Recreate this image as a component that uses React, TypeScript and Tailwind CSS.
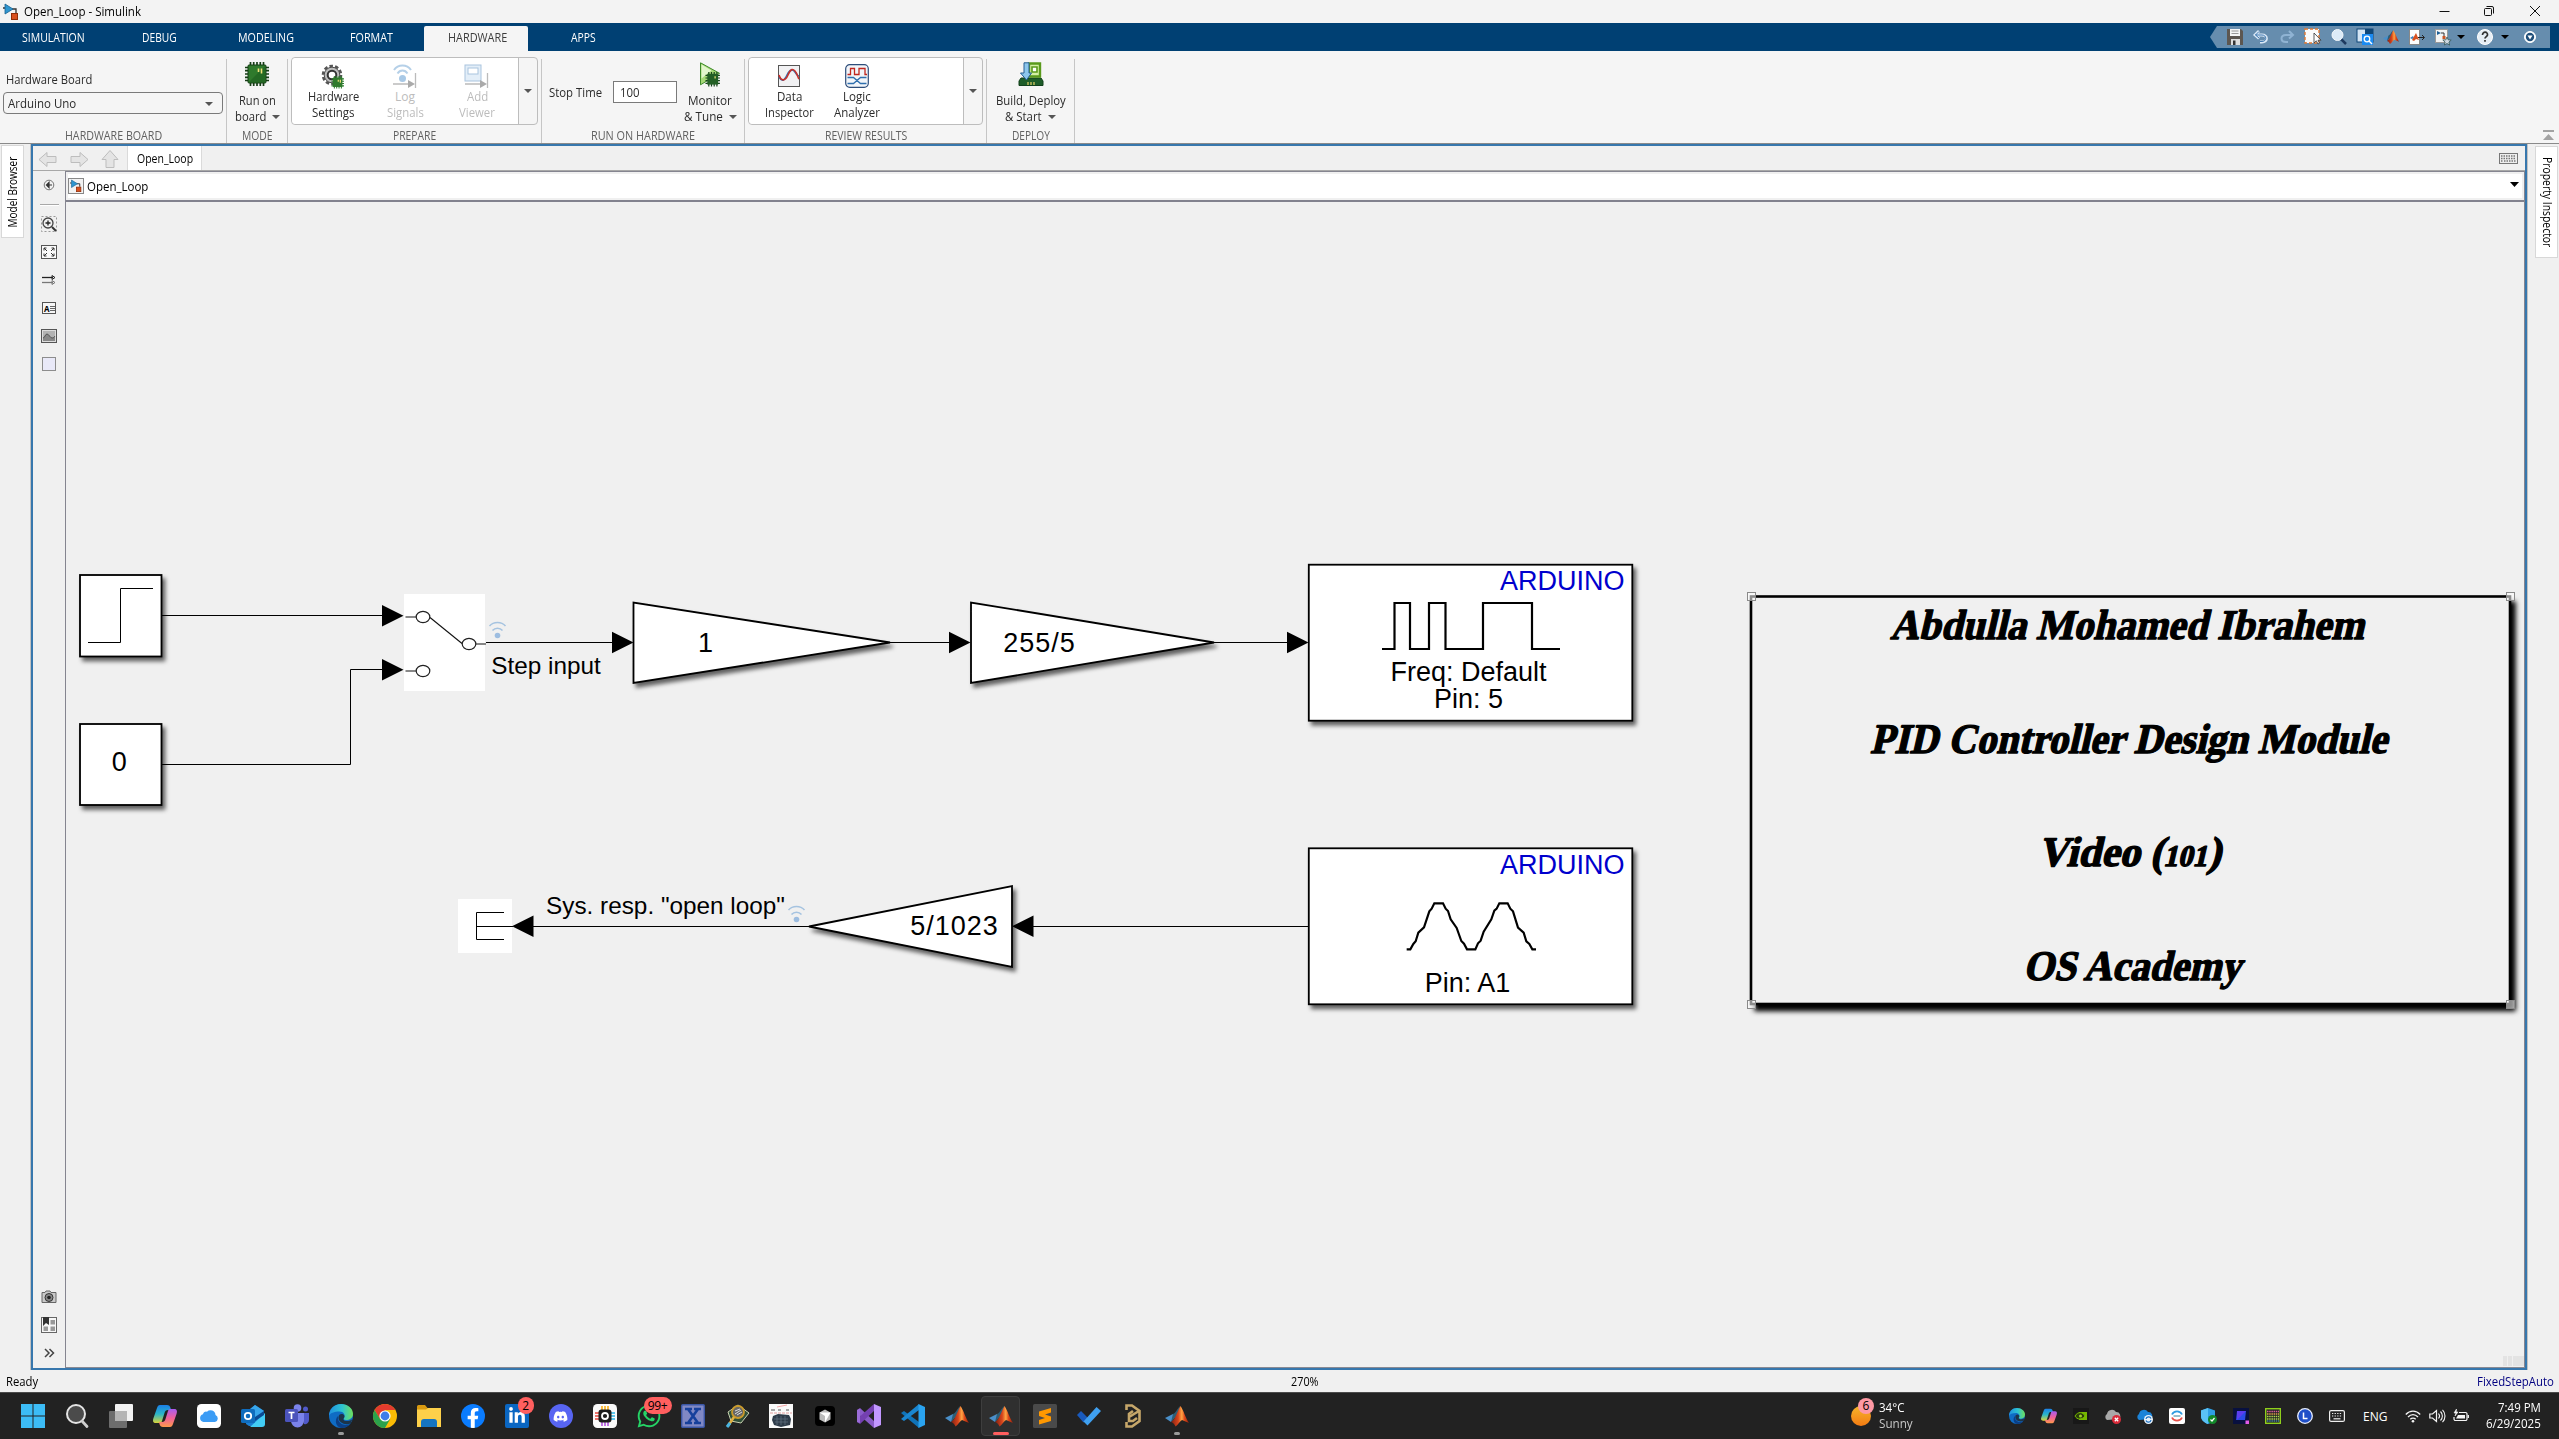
import { useLayoutEffect, useRef, useState } from "react";
import type { ReactNode } from "react";
import { FaDiscord, FaFacebookF, FaLinkedinIn, FaWhatsapp } from "react-icons/fa";

/* Text condensed or widened to a fixed advance width. */
function Fit({ w, children, className = "" }: { w: number; children: ReactNode; className?: string }) {
  const ref = useRef<HTMLSpanElement>(null);
  const [scale, setScale] = useState(1);
  useLayoutEffect(() => {
    const natural = ref.current?.offsetWidth ?0 + ref.current.offsetWidth : 0;
    if (natural) setScale(w / natural);
  }, [w]);
  return (
    <span className={`block shrink-0 whitespace-nowrap ${className}`} style={{ width: w }}>
      <span ref={ref} className="inline-block origin-left" style={{ transform: `scaleX(${scale})` }}>
        {children}
      </span>
    </span>
  );
}

function Ic({ s = 16, vb = 16, children, className = "" }: { s?: number; vb?: number; children: ReactNode; className?: string }) {
  return (
    <svg width={s} height={s} viewBox={`0 0 ${vb} ${vb}`} fill="none" className={`shrink-0 overflow-visible ${className}`}>
      {children}
    </svg>
  );
}

function Caret({ className = "text-[#555]" }: { className?: string }) {
  return (
    <svg width="8" height="4" viewBox="0 0 8 4" className={`shrink-0 ${className}`}>
      <path d="M0 0h8L4 4z" fill="currentColor" />
    </svg>
  );
}

/* ---------- icons ---------- */

const Matlab = ({ s = 24 }: { s?: number }) => (
  <Ic s={s} vb={24}>
    <defs>
      <linearGradient id="mlo" x1="0" x2="1">
        <stop offset="0" stopColor="#7a1f12" />
        <stop offset=".4" stopColor="#d8441c" />
        <stop offset=".6" stopColor="#ffa544" />
        <stop offset=".75" stopColor="#dd4a1a" />
        <stop offset="1" stopColor="#8f1c0c" />
      </linearGradient>
    </defs>
    <path d="M0 14l8-4 3 2-5 6z" fill="#4a8fc9" />
    <path d="M8 10c3-1 4-5 7-8l-2 8-7 8z" fill="#2c5d74" />
    <path d="M6 18c4-2 6-10 9.500-16 3 4 5 12 8.500 17l-7-3c-2 1-4 5-6.500 6.500-1-2-2-4-4.500-4.500z" fill="url(#mlo)" />
  </Ic>
);

const ModelIcon = () => (
  <Ic>
    <path d="M0 4h2M9 5h4v4" stroke="#333" strokeWidth="1.300" />
    <path d="M2 0l8 5-8 5z" fill="#2f96d0" stroke="#16618f" strokeWidth=".8" />
    <rect x="8.500" y="9.500" width="6" height="6" fill="#d9501e" stroke="#8f2c08" />
  </Ic>
);

const Chip = ({ s = 24 }: { s?: number }) => (
  <Ic s={s} vb={24}>
    <path d="M5.500 0v24M8.700 0v24M12 0v24M15.300 0v24M18.500 0v24M0 5.500h24M0 8.700h24M0 12h24M0 15.300h24M0 18.500h24" stroke="#173d17" strokeWidth="1.700" />
    <rect x="3" y="3" width="18" height="18" rx="1" fill="#2f7a2c" stroke="#123f12" />
    <path d="M4 20L20 4v16z" fill="#1e5e20" opacity=".6" />
    <path d="M13.500 6.500v3.500M16.500 6.500v5" stroke="#f3e27a" strokeWidth="1.600" />
  </Ic>
);

const HwSettings = () => (
  <Ic s={24} vb={24}>
    <circle cx="11" cy="11" r="9" stroke="#555" strokeWidth="2.600" strokeDasharray="3.500 2.155" />
    <circle cx="11" cy="11" r="7.800" fill="#bdbdbd" stroke="#4d4d4d" />
    <circle cx="11" cy="11" r="4.300" fill="#fff" stroke="#333" strokeWidth="2" />
    <g transform="translate(10.500 12) scale(.52)">
      <path d="M5.500 0v24M10 0v24M14.500 0v24M19 0v24M0 5.500h24M0 10h24M0 14.500h24M0 19h24" stroke="#2c7d2c" strokeWidth="2" />
      <rect x="3" y="3" width="18" height="18" fill="#2f7a2c" />
      <path d="M13 7v4M17 7v6" stroke="#f3e27a" strokeWidth="2.200" />
    </g>
  </Ic>
);

const LogSignals = () => (
  <Ic s={24} vb={24}>
    <path d="M1 6c4-6 13-6 17 0M4.500 9.500c2.500-4 7.500-4 10 0" stroke="#b5d0e8" strokeWidth="2" />
    <circle cx="9.500" cy="14.500" r="3.500" fill="#a9c9e6" />
    <path d="M0 20h17M22.500 9v15" stroke="#bbb" strokeWidth="1.300" />
    <path d="M15 16l7 4-7 4z" fill="#aaa" />
  </Ic>
);

const AddViewer = () => (
  <Ic s={24} vb={24}>
    <rect x="0" y="1" width="16" height="16" fill="#e3eef8" stroke="#a9c4de" />
    <rect x="3" y="4" width="10" height="6" fill="#fff" stroke="#a9c4de" />
    <path d="M0 20h17M22.500 9v15" stroke="#bbb" strokeWidth="1.300" />
    <path d="M15 16l7 4-7 4z" fill="#aaa" />
  </Ic>
);

const MonitorTune = () => (
  <Ic s={24} vb={24}>
    <path d="M2.500.8l19 10.500-19 11.500z" fill="#a6d977" stroke="#3e8a2a" />
    <path d="M3.500 2.500l10 6-10 8z" fill="#e2f5cc" />
    <g transform="translate(7.500 10) scale(.6)">
      <path d="M5.500 0v24M10 0v24M14.500 0v24M19 0v24M0 5.500h24M0 10h24M0 14.500h24M0 19h24" stroke="#16401a" strokeWidth="2" />
      <rect x="3" y="3" width="18" height="18" fill="#235f25" />
      <path d="M16 7v4" stroke="#f3e27a" strokeWidth="2" />
    </g>
  </Ic>
);

const DataInspector = () => (
  <Ic s={22} vb={22}>
    <rect x=".5" y=".5" width="21" height="21" fill="#f1f1f3" stroke="#555" />
    <path d="M1 12c3 5 5 4 8-2s6-6 8-3 3 4 4 4" stroke="#2f6fae" strokeWidth="1.600" />
    <path d="M1 10c2 6 6 7 9 0s5-6 7-4 3 7 4 8" stroke="#c8302c" strokeWidth="1.600" />
  </Ic>
);

const LogicAnalyzer = () => (
  <Ic s={24} vb={24}>
    <rect x=".7" y=".7" width="22.600" height="22.600" rx="4" fill="#f2f5f9" stroke="#2d4d7a" strokeWidth="1.200" />
    <path d="M2.500 10.500h3v-6h4v6h4.500v-6h6v6h2" stroke="#c0271f" strokeWidth="1.300" />
    <path d="M2.500 13.500h6l7 6h6M2.500 19.500h6l7-6h6" stroke="#2f6fae" strokeWidth="1.300" />
  </Ic>
);

const BuildDeploy = () => (
  <Ic s={24} vb={24}>
    <path d="M2 16l-2 3v4.500h24V19l-2-3z" fill="#1d5c28" stroke="#12401b" />
    <path d="M9 20v3M12 20v3M15 20v3" stroke="#e4cf66" strokeWidth="1.200" />
    <path d="M10 1.500h11v13H10z" stroke="#5a9a1c" strokeWidth="2.400" fill="#d4efa4" />
    <path d="M13 5h5v5h-5z" fill="#fff" stroke="#5a9a1c" strokeWidth="1.600" />
    <path d="M5 .8h5V11h2.500L7.500 18 1.500 11H5z" fill="#8cc6ec" stroke="#265e93" />
  </Ic>
);

/* ---------- ribbon ---------- */

function Section({ label, lw, width, children }: { label: string; lw: number; width: string; children: ReactNode }) {
  return (
    <div className={`flex h-full shrink-0 ${width}`}>
      <div className="flex min-w-0 flex-1 flex-col">
        <div className="h-[77px]">{children}</div>
        <div className="flex h-[15px] justify-center text-[#616161]">
          <Fit w={lw}>{label}</Fit>
        </div>
      </div>
      <div className="mt-2 w-px bg-[#c6c6c6]" />
    </div>
  );
}

function ToolButton({ icon, a, aw, b, bw, caret, dim, width, gap = "gap-px" }: {
  icon: ReactNode; a: string; aw: number; b: string; bw: number; caret?: boolean; dim?: boolean; width: string; gap?: string;
}) {
  return (
    <div className={`flex flex-col items-center ${width} ${gap} ${dim ? "text-[#bcbcbc]" : "text-[#2b2b2b]"}`}>
      <div className="flex h-6 items-center">{icon}</div>
      <div className="flex flex-col items-center">
        <Fit w={aw}>{a}</Fit>
        <div className="flex items-center gap-1.5">
          <Fit w={bw}>{b}</Fit>
          {caret && <Caret />}
        </div>
      </div>
    </div>
  );
}

function Gallery({ width, pad, children }: { width: string; pad: string; children: ReactNode }) {
  return (
    <div className={`mt-1.5 ml-[3px] flex h-[68px] rounded border border-[#bdbdbd] bg-[#f5f5f5] ${width}`}>
      <div className={`flex flex-1 rounded-l bg-white pt-1.5 ${pad}`}>{children}</div>
      <div className="flex w-[19px] items-center justify-center border-l border-[#bdbdbd]">
        <Caret />
      </div>
    </div>
  );
}

const TABS = [
  { t: "SIMULATION", w: 63 },
  { t: "DEBUG", w: 35 },
  { t: "MODELING", w: 56 },
  { t: "FORMAT", w: 43 },
  { t: "HARDWARE", w: 59 },
  { t: "APPS", w: 25 },
];

function TitleBar() {
  return (
    <div className="flex h-[23px] items-center bg-[#f3f3f3] pl-[3px]">
      <ModelIcon />
      <Fit w={117} className="ml-[5px] leading-[22px] text-black">Open_Loop - Simulink</Fit>
      <div className="mr-[19px] ml-auto flex items-center gap-[35px] text-black">
        <Ic s={10} vb={10}><path d="M-.5 4.500h10" stroke="#111" /></Ic>
        <Ic s={10} vb={10} className="-ml-px">
          <rect x=".5" y="1.500" width="7" height="7" rx="1" stroke="#111" />
          <path d="M2.500 -.5H8A1.500 1.500 0 0 1 9.500 1v5.500" stroke="#111" />
        </Ic>
        <Ic s={10} vb={10} className="ml-px"><path d="M0-1l10 10M10-1L0 9" stroke="#111" /></Ic>
      </div>
    </div>
  );
}

function QuickAccess() {
  return (
    <div className="mt-[3px] mr-[9px] ml-auto flex h-[22px] items-center">
      <svg width="7" height="22" viewBox="0 0 7 22" className="shrink-0"><path d="M7 0v22L0 11z" fill="#668dae" /></svg>
      <div className="flex h-full w-[333px] items-center bg-[#668dae] pl-2.5">
        <div className="flex items-center gap-[10px]">
          <Ic>
            <path d="M0 0h14l2 2v14H0z" fill="#5c5650" />
            <path d="M3 0h10v7H3z" fill="#f4f4f4" /><path d="M4.500 2h7M4.500 4.500h7" stroke="#999" />
            <path d="M4 10h9v6H4z" fill="#ddd" /><path d="M6 11.500h2.500V16H6z" fill="#333" />
          </Ic>
          <Ic>
            <path d="M6 2L2 6l4 3.500M2 6h7c6 0 6 7 0 7H7" stroke="#dbe9f7" strokeWidth="2.800" />
            <path d="M6 2.500L2.500 6 6 9M2.500 6H9c5 0 5 6.500 0 6.500H7" stroke="#2e6ca8" strokeWidth=".9" />
          </Ic>
          <Ic><path d="M10 2l4 4-4 3.500M14 6H7c-6 0-6 7 0 7h2" stroke="#8fb3d3" strokeWidth="2" /></Ic>
          <Ic>
            <rect x="0" y="0" width="14" height="14" fill="#fbfbfb" stroke="#e07a35" strokeWidth="1.400" strokeDasharray="3 2" />
            <path d="M9 4v10l2.300-2.200L13 15l1.500-.8-1.500-3h3z" fill="#fff" stroke="#333" strokeWidth=".8" />
          </Ic>
          <Ic>
            <path d="M10 10l5 5" stroke="#1e3a5f" strokeWidth="2.500" />
            <circle cx="6.500" cy="6" r="5.500" fill="#dcebf7" stroke="#f4f8fb" />
          </Ic>
          <Ic>
            <rect x="0" y="0" width="16" height="13" fill="#d6e6f4" stroke="#0f4778" /><path d="M8 0h8v6H8z" fill="#0f4778" />
            <rect x="5" y="5" width="11" height="11" fill="#1b8bf2" /><circle cx="10" cy="10" r="2.800" stroke="#fff" strokeWidth="1.300" /><path d="M12 12l3 3" stroke="#fff" strokeWidth="1.400" />
          </Ic>
          <Matlab s={16} />
          <Ic>
            <rect x=".5" y=".5" width="10" height="15" fill="#fdfdfd" stroke="#888" />
            <path d="M1 9l3-2 1 2-2 1z" fill="#3b80bd" /><path d="M3 11l4-7 3 7-3-1-2 2z" fill="#d8501e" /><path d="M9 8.500h6M13 6l2.500 2.500L13 11" stroke="#222" />
          </Ic>
          <Ic>
            <rect x=".5" y=".5" width="12" height="13" fill="#f4f4f4" stroke="#999" />
            <path d="M2 2l4 2-4 2z" fill="#1d5f96" /><path d="M6 4h3v4" stroke="#333" /><rect x="7.500" y="7" width="3" height="3" fill="#c52" />
            <path d="M12 8l1.200 2.800 3 .3-2.300 2 .7 3-2.600-1.600L9.400 16l.7-3-2.300-2 3-.2z" fill="#cfd9e2" stroke="#355" strokeWidth=".8" />
          </Ic>
        </div>
        <Caret className="ml-[6px] text-black" />
        <Ic className="ml-3">
          <circle cx="8" cy="8" r="7.500" fill="#e6eef5" stroke="#fff" />
          <path d="M5.500 6c0-4 5.500-3.500 5 0-.3 1.600-2.500 1.700-2.500 3.500M8 11v1.800" stroke="#333" strokeWidth="1.700" />
        </Ic>
        <Caret className="ml-2 text-black" />
        <Ic s={12} vb={12} className="ml-[15px]">
          <circle cx="6" cy="6" r="5.500" fill="#fff" stroke="#fff" /><circle cx="6" cy="6" r="4.200" fill="#1f4e79" /><path d="M3.500 4.500h5L6 8.500z" fill="#fff" />
        </Ic>
      </div>
    </div>
  );
}

function Ribbon() {
  return (
    <>
      <div className="flex h-7 bg-[#004073]">
        {TABS.map((t) => {
          const active = t.t === "HARDWARE";
          return (
            <div key={t.t} className="h-full w-[106px] shrink-0 pt-[3px]">
              <div className={`flex h-[25px] w-[104px] justify-center rounded-t-[2px] pl-[3px] leading-6 ${active ? "bg-[#f5f5f5] text-[#3c3c3c]" : "text-white"}`}>
                <Fit w={t.w}>{t.t}</Fit>
              </div>
            </div>
          );
        })}
        <QuickAccess />
      </div>
      <div className="flex h-[93px] border-b border-[#8a8a8a] bg-[#f5f5f5] leading-4">
        <Section label="HARDWARE BOARD" lw={97} width="w-[227px]">
          <div className="pt-[21px] pl-[3px] text-[#2b2b2b]">
            <Fit w={86} className="ml-[3px]">Hardware Board</Fit>
            <div className="mt-1 flex h-[22px] w-[220px] items-center justify-between rounded border border-[#7a7a7a] pt-px pr-[9px] pl-1">
              <Fit w={68}>Arduino Uno</Fit>
              <Caret />
            </div>
          </div>
        </Section>
        <Section label="MODE" lw={31} width="w-[61px]">
          <div className="pt-[11px]">
            <ToolButton icon={<Chip />} a="Run on" aw={37} b="board" bw={31} caret width="w-[60px]" gap="gap-[7px]" />
          </div>
        </Section>
        <Section label="PREPARE" lw={43} width="w-[254px]">
          <Gallery width="w-[247px]" pad="pl-[5px]">
            <ToolButton icon={<HwSettings />} a="Hardware" aw={51} b="Settings" bw={43} width="w-[72px]" />
            <ToolButton icon={<LogSignals />} a="Log" aw={20} b="Signals" bw={37} dim width="w-[72px]" />
            <ToolButton icon={<AddViewer />} a="Add" aw={21} b="Viewer" bw={36} dim width="w-[72px]" />
          </Gallery>
        </Section>
        <Section label="RUN ON HARDWARE" lw={104} width="w-[203px]">
          <div className="flex">
            <div className="mt-[30px] flex h-[22px] items-center pl-[7px] text-[#2b2b2b]">
              <Fit w={53} className="pt-px">Stop Time</Fit>
              <div className="ml-[11px] flex h-[22px] w-16 items-center border border-[#7a7a7a] bg-white pt-px pl-[6px]">
                <Fit w={20}>100</Fit>
              </div>
            </div>
            <div className="pt-[11px] pl-px">
              <ToolButton icon={<MonitorTune />} a="Monitor" aw={44} b="& Tune" bw={39} caret width="w-16" gap="gap-[7px]" />
            </div>
          </div>
        </Section>
        <Section label="REVIEW RESULTS" lw={82} width="w-[242px]">
          <Gallery width="w-[235px]" pad="pl-[6px]">
            <ToolButton icon={<DataInspector />} a="Data" aw={25} b="Inspector" bw={49} width="w-[68px]" />
            <ToolButton icon={<LogicAnalyzer />} a="Logic" aw={28} b="Analyzer" bw={46} width="w-[68px]" />
          </Gallery>
        </Section>
        <Section label="DEPLOY" lw={38} width="w-[88px]">
          <div className="pt-[11px]">
            <ToolButton icon={<BuildDeploy />} a="Build, Deploy" aw={70} b="& Start" bw={37} caret width="w-[87px]" gap="gap-[7px]" />
          </div>
        </Section>
        <svg width="11" height="11" viewBox="0 0 11 11" className="mt-[79px] mr-[5px] ml-auto">
          <path d="M0 0h11v2H0zM0 10h11L5.500 4z" fill="#a3a3a3" />
        </svg>
      </div>
    </>
  );
}

/* ---------- left palette ---------- */

function Palette() {
  return (
    <div className="flex w-8 flex-col items-center pt-[8px] pb-1">
      <Ic s={12} vb={12}><circle cx="6" cy="6" r="4.800" stroke="#777" /><path d="M9 6H4M6 3.500L3.500 6 6 8.500z" stroke="#333" strokeWidth="1.200" fill="#333" /></Ic>
      <div className="mt-[13px] h-[2px] w-[19px] border-b border-white bg-[#a8a8a8]" />
      <Ic className="mt-2.5">
        <rect x=".5" y=".5" width="15" height="15" stroke="#999" strokeDasharray="2 2" />
        <circle cx="7" cy="7" r="5" fill="#f0f0f0" stroke="#444" strokeWidth="1.300" /><path d="M4.500 7h5M7 4.500v5" stroke="#222" strokeWidth="1.300" /><path d="M11 11l4 4" stroke="#333" strokeWidth="2" />
      </Ic>
      <Ic className="mt-3">
        <rect x=".5" y="1.500" width="15" height="13" fill="#fafafa" stroke="#555" />
        <path d="M3 6.500V4h2.500M3 4l3 3M13 6.500V4h-2.500M13 4l-3 3M3 9.500V12h2.500M3 12l3-3M13 9.500V12h-2.500M13 12l-3-3" stroke="#333" />
      </Ic>
      <Ic className="mt-3"><path d="M1 5.500h11" stroke="#222" strokeWidth="1.300" /><path d="M1 10.500h11" stroke="#777" strokeWidth="1.300" /><path d="M11 3.500l3 2-3 2z" stroke="#222" /><path d="M11 8.500l3 2-3 2z" stroke="#777" /></Ic>
      <div className="mt-[14px] flex h-3 w-3.5 items-center border border-[#555] bg-[#f7f7f7] pl-px">
        <span className="font-['Noto_Sans'] text-[8px] leading-[9px] font-bold text-black">A</span>
        <Ic s={5} vb={5}><path d="M0 .5h5M0 2.500h5M0 4.500h5" stroke="#666" /></Ic>
      </div>
      <Ic className="mt-3.5">
        <rect x=".5" y="1.500" width="15" height="13" fill="#ddd" stroke="#555" /><rect x="2" y="3" width="12" height="10" fill="#b3b3b3" />
        <path d="M2 10c2 0 2-4 4-4s3 4 5 4 2-1 3-2v5H2z" fill="#888" /><path d="M2 10c2 0 2-4 4-4s3 4 5 4 2-1 3-2" stroke="#555" />
      </Ic>
      <div className="mt-[13px] h-3.5 w-3.5 border border-[#8d8d8d] bg-[#e9e9f8]" />
      <Ic className="mt-auto">
        <path d="M1 3.500h3l1-1.500h4l1 1.500h5v10H1z" fill="#c9c9c9" stroke="#666" /><circle cx="8" cy="8.500" r="4" fill="#888" stroke="#333" /><circle cx="8" cy="8.500" r="1.800" fill="#222" />
      </Ic>
      <Ic className="mt-3">
        <rect x=".5" y=".5" width="15" height="15" fill="#f7f7f7" stroke="#666" /><path d="M2 0h6v8L5 6 2 9z" fill="#333" /><path d="M9.500 3h4.500v4.500H9.500zM9.500 9.500h4.500V14H9.500zM2.500 9.500H7V14H2.500z" fill="#999" />
      </Ic>
      <Ic s={10} vb={10} className="mt-[15px] mb-[6px]"><path d="M1 1l4 4-4 4M5.500 1l4 4-4 4" stroke="#444" strokeWidth="1.500" /></Ic>
    </div>
  );
}

/* ---------- diagram ---------- */

const Arrow = ({ x, y, left }: { x: number; y: number; left?: boolean }) => (
  <path d={left ? `M${x} ${y}l21.500-10.700v21.400z` : `M${x} ${y}l-21.500-10.700v21.400z`} fill="#000" />
);

const Logged = ({ x, y }: { x: number; y: number }) => (
  <g transform={`translate(${x} ${y})`}>
    <path d="M-8-9.500c4-4.700 12-4.700 16 0M-5-5c2.500-3 7.500-3 10 0" fill="none" stroke="#a5c3e0" strokeWidth="1.500" />
    <circle r="2.800" fill="#9dbde0" />
  </g>
);

const Handle = ({ x, y }: { x: number; y: number }) => (
  <rect x={x - 4} y={y - 4} width="8" height="8" fill="#fff" fillOpacity=".55" stroke="#8a8a8a" />
);

/* One slanted run of the title annotation, anchored at its baseline start. */
const Slanted = ({ x, y, w, size = "text-[42px]", children }: { x: number; y: number; w: number; size?: string; children: string }) => (
  <text transform={`translate(${x} ${y}) skewX(-13)`} textLength={w} lengthAdjust="spacingAndGlyphs" className={size}>
    {children}
  </text>
);

function Diagram() {
  return (
    <svg width="2458" height="1165" viewBox="66 202 2458 1165" className="block font-['Liberation_Sans',sans-serif] text-[27px]">
      <defs>
        <filter id="sh" x="-20%" y="-20%" width="140%" height="150%">
          <feDropShadow dx="3" dy="4" stdDeviation="2" floodOpacity=".6" />
        </filter>
        <filter id="shb" x="-5%" y="-5%" width="110%" height="112%">
          <feDropShadow dx="4.500" dy="6" stdDeviation="2.800" floodOpacity="1" />
        </filter>
      </defs>

      <g fill="none" stroke="#000" strokeWidth="1">
        <path d="M162 615.500H383M162 764.500H350.500V669.500H383M486 642.500H612M888 642.500H950M1213 642.500H1288M1308 926.500H1033M809 926.500H533" />
      </g>

      <g fill="#fff" stroke="#000" strokeWidth="1.800">
        <rect x="80" y="575" width="81.500" height="81.500" filter="url(#sh)" />
        <rect x="80" y="724" width="81.500" height="81" filter="url(#sh)" />
        <path d="M633.500 602.500V683L890 642.500z" filter="url(#sh)" />
        <path d="M971 602.500V683L1214 642.500z" filter="url(#sh)" />
        <path d="M1012 886V967L809 926.500z" filter="url(#sh)" />
        <rect x="1308.800" y="564.700" width="323.500" height="156" filter="url(#sh)" />
        <rect x="1308.800" y="848.300" width="323.500" height="156" filter="url(#sh)" />
      </g>
      <path d="M88 642.500H120.500V588.500H153" fill="none" stroke="#000" />

      <rect x="404" y="594" width="81" height="97" fill="#fff" />
      <path d="M405.500 617H416M405.500 671H416M476 644H486" stroke="#888" strokeWidth="2" />
      <path d="M430 617.500L462 643.500" stroke="#111" strokeWidth="1.100" />
      <g fill="#fff" stroke="#222" strokeWidth="1.200">
        <ellipse cx="423" cy="617" rx="6.800" ry="5.600" />
        <ellipse cx="469" cy="644" rx="6.800" ry="5.600" />
        <ellipse cx="423" cy="671" rx="6.800" ry="5.600" />
      </g>

      <rect x="458" y="899" width="54" height="54" fill="#fff" />
      <path d="M504 912.500H476.500V939.500H504M476.500 926.500H513" fill="none" stroke="#000" />

      <Arrow x={403.500} y={615.700} />
      <Arrow x={403.500} y={669.700} />
      <Arrow x={633.500} y={642.500} />
      <Arrow x={970.500} y={642.500} />
      <Arrow x={1308.500} y={642.500} />
      <Arrow x={1012} y={926.300} left />
      <Arrow x={512} y={926.300} left />
      <Logged x={497.500} y={635.500} />
      <Logged x={796.500} y={919.500} />

      <path d="M1382 649H1394.500V603H1410V649H1429V603H1445.500V649H1483V603H1532V649H1560" fill="none" stroke="#000" strokeWidth="2.200" />
      <g transform="translate(1280 540) scale(.33333)">
        <path d="M380 1228L391 1228 400 1212 407 1204 415 1178 432 1162 448 1114 455 1106 463 1090 489 1090 497 1106 504 1113 512 1138 530 1164 544 1203 552 1211 561 1228 586 1228 594 1210 602 1202 611 1175 634 1138 643 1112 650 1106 658 1090 683 1090 691 1106 699 1114 714 1163 731 1178 739 1204 748 1212 757 1228 768 1228" fill="none" stroke="#000" strokeWidth="6.500" />
      </g>

      <g fill="#000" textAnchor="middle">
        <text x="119.300" y="771">0</text>
        <text x="705.500" y="652">1</text>
        <text x="1039.500" y="652" letterSpacing="1">255/5</text>
        <text x="954.500" y="935" letterSpacing="1">5/1023</text>
        <text x="1468.500" y="681">Freq: Default</text>
        <text x="1468.500" y="708">Pin: 5</text>
        <text x="1467.500" y="992">Pin: A1</text>
        <g className="text-[24.3px]">
          <text x="546" y="674">Step input</text>
          <text x="665.500" y="914">Sys. resp. "open loop"</text>
        </g>
      </g>
      <g fill="#0000cd" textAnchor="end">
        <text x="1624.500" y="590">ARDUINO</text>
        <text x="1624.500" y="874">ARDUINO</text>
      </g>

      <rect x="1751" y="596.500" width="759" height="407.500" fill="#f0f0f0" stroke="#000" strokeWidth="2.600" filter="url(#shb)" />
      <g className="font-['Liberation_Serif',serif] font-bold" fill="#000" stroke="#000" strokeWidth="1.300" strokeLinejoin="round">
        <Slanted x={1890} y={639} w={474}>Abdulla Mohamed Ibrahem</Slanted>
        <Slanted x={1870} y={752.500} w={517}>PID Controller Design Module</Slanted>
        <Slanted x={2038} y={866} w={102}>Video</Slanted>
        <Slanted x={2150} y={866} w={14}>(</Slanted>
        <Slanted x={2163} y={866} w={44} size="text-[30px]">101</Slanted>
        <Slanted x={2207} y={866} w={14}>)</Slanted>
        <Slanted x={2023} y={979.500} w={218}>OS Academy</Slanted>
      </g>
      <Handle x={1751.500} y={596.500} />
      <Handle x={2510.500} y={596.500} />
      <Handle x={1751.500} y={1004.500} />
      <Handle x={2510.500} y={1004.500} />
      <path d="M2503 1356h4v10h-4zM2508 1356h4v10h-4zM2513 1356h11v10h-11z" fill="#e3e3e3" />
    </svg>
  );
}

function Editor() {
  return (
    <div className="flex h-[1226px] w-[2496px] flex-col border-2 border-[#3777ad] bg-[#f0f0f0]">
      <div className="flex h-[25px] items-start border-b border-[#a8a8a8]">
        <svg width="94" height="24" viewBox="0 0 94 24" className="shrink-0" fill="#e4e4e4" stroke="#bdbdbd">
          <path d="M6 13.500l8-7v4h9v6h-9v4z" />
          <path d="M55 13.500l-8-7v4h-9v6h9v4z" />
          <path d="M77 4.500l8 9h-4v8h-8v-8h-4z" />
        </svg>
        <div className="flex h-6 w-[75px] justify-center border-x border-[#dadada] bg-white leading-[25px] text-black">
          <Fit w={56}>Open_Loop</Fit>
        </div>
        <svg width="19" height="12" viewBox="0 0 19 12" className="mt-[7px] mr-[7px] ml-auto" fill="none">
          <rect x=".5" y=".5" width="18" height="10" fill="#eee" stroke="#777" />
          <path d="M2 3h15M2 5.500h15M2 8h2M5 8h9M15 8h2" stroke="#777" strokeWidth="1.300" strokeDasharray="1.500 1" />
        </svg>
      </div>
      <div className="flex flex-1">
        <Palette />
        <div className="flex flex-1 flex-col border border-b-[#8a8a93] border-[#858590]">
          <div className="flex h-[30px] border-b-2 border-[#82828e] px-[2px] py-[2px]">
            <div className="flex flex-1 items-center bg-white">
              <div className="flex h-4 w-4 items-center justify-center border border-[#888] bg-[#f3f3f3] [&>svg]:h-3 [&>svg]:w-3"><ModelIcon /></div>
              <Fit w={61} className="ml-[3px] text-[13px] leading-[23px] text-black">Open_Loop</Fit>
              <svg width="9" height="5" viewBox="0 0 9 5" className="mr-[3px] mb-[3px] ml-auto"><path d="M0 0h9L4.500 5z" fill="#000" /></svg>
            </div>
          </div>
          <div className="h-[1165px] overflow-hidden">
            <Diagram />
          </div>
        </div>
      </div>
    </div>
  );
}

/* ---------- taskbar ---------- */

const Edge = ({ s = 24 }: { s?: number }) => (
  <Ic s={s} vb={24}>
    <defs><linearGradient id="edg" x1="0" y1="0" x2="1" y2="0"><stop offset="0" stopColor="#1f8fe0" /><stop offset=".55" stopColor="#2ec3d0" /><stop offset="1" stopColor="#6fe05a" /></linearGradient></defs>
    <circle cx="12" cy="12" r="12" fill="#0f6cc4" />
    <path d="M0 12C0 5 5 0 12 0s12 4.500 12 10c0 4-3.500 6-7 6-2 0-3-1-2-2 2-3-.5-6.500-4.500-6.500C5 7.500 1 9 0 12z" fill="url(#edg)" />
    <path d="M9 12c-1 6 4 9 8 9 2 0 4-.8 5-2-2 3.500-6 5-10 5-5-1-7-8-3-12z" fill="#0b3f87" />
    <path d="M15 14c-1.500 1.500 0 3.500 4 3 2-.2 3.500-1 4.500-2l-2 4.500c-6 2-12-1-12-6 0-3 2-4 4-3.500 2 .7 2.500 2.500 1.500 4z" fill="#222" opacity=".75" />
  </Ic>
);

const Copilot = ({ s = 24 }: { s?: number }) => (
  <Ic s={s} vb={24}>
    <defs>
      <linearGradient id="cpa" x1="0" y1="0" x2="0" y2="1"><stop offset="0" stopColor="#1b7fe8" /><stop offset=".5" stopColor="#2bb6c8" /><stop offset="1" stopColor="#d9d43a" /></linearGradient>
      <linearGradient id="cpb" x1="0" y1="0" x2="0" y2="1"><stop offset="0" stopColor="#a85cf0" /><stop offset=".5" stopColor="#f0609a" /><stop offset="1" stopColor="#ff9a4a" /></linearGradient>
    </defs>
    <path d="M7 1h7c2 0 3 1 3.500 3L18 6h-3c-2 0-3 1-3.500 3L9 17c-.5 1.500-1.500 2-3 2H3c-3 0-3.500-2-2.500-5L4 4c.6-2 1.500-3 3-3z" fill="url(#cpa)" />
    <path d="M17 23h-7c-2 0-3-1-3.500-3L6 18h3c2 0 3-1 3.500-3L15 7c.5-1.500 1.500-2 3-2h3c3 0 3.500 2 2.500 5L20 20c-.6 2-1.500 3-3 3z" fill="url(#cpb)" />
  </Ic>
);

const Badge = ({ wide, children }: { wide: boolean; children: ReactNode }) => (
  <span className={`absolute -top-[7px] flex h-[17px] items-center justify-center rounded-full bg-[#ff5f5f] text-[12px] leading-4 tracking-tight text-black ${wide ? "left-[7px] w-7" : "left-[13px] w-4"}`}>{children}</span>
);

const APPS: { name: string; icon: ReactNode; badge?: string; mark?: "idle" | "active" }[] = [
  { name: "start", icon: <Ic s={24} vb={24}><path d="M0 0h11.500v11.500H0zM12.500 0H24v11.500H12.500zM0 12.500h11.500V24H0zM12.500 12.500H24V24H12.500z" fill="#3cbcf6" /></Ic> },
  { name: "search", icon: <Ic s={24} vb={24}><circle cx="11" cy="10" r="9" fill="#4b4b4b" stroke="#e4e4e4" strokeWidth="2" /><path d="M17 17l5 5.500" stroke="#cfcfcf" strokeWidth="2.800" strokeLinecap="round" /></Ic> },
  { name: "views", icon: <Ic s={24} vb={24}><rect x="6" y="0" width="18" height="17" rx="1" fill="#f2f2f2" /><rect x="0" y="7" width="18" height="17" rx="1" fill="#777" opacity=".88" /><path d="M6 7h12v10H6z" fill="#b5b5b5" /></Ic> },
  { name: "copilot", icon: <Copilot /> },
  { name: "icloud", icon: <Ic s={24} vb={24}><rect width="24" height="24" rx="4.500" fill="#fff" /><path d="M6.500 18a4 4 0 0 1-.5-7.800 3 3 0 0 1 4-2.500A5 5 0 0 1 18.500 11 3.700 3.700 0 0 1 18 18z" fill="#3b9cf5" /></Ic> },
  { name: "outlook", icon: <Ic s={24} vb={24}><path d="M5 8l9-7 9 6v15H8l-3-2z" fill="#1a7fd4" /><path d="M14 1l9 6-9 7-8-6z" fill="#37a5ea" /><path d="M24 9v11a3 3 0 0 1-3 3H9z" fill="#42cdf5" /><path d="M14 13l9-6v4l-9 6z" fill="#0b4b94" /><rect y="5" width="14" height="14" rx="1.500" fill="#0f6cbd" /><circle cx="7" cy="12" r="3.200" stroke="#fff" strokeWidth="1.800" /></Ic> },
  { name: "teams", icon: <Ic s={24} vb={24}><circle cx="12.500" cy="4" r="3.800" fill="#7b83eb" /><circle cx="20.500" cy="5" r="2.500" fill="#5059c9" /><path d="M17 9h7v7a4 4 0 0 1-5 4z" fill="#5059c9" /><path d="M6 9h13v8a6 6 0 0 1-13 0z" fill="#7b83eb" /><rect y="5" width="13" height="13" rx="1.500" fill="#4b53bc" /><path d="M3.500 8.500h6M6.500 8.500V15" stroke="#fff" strokeWidth="1.700" /></Ic> },
  { name: "edge", icon: <Edge />, mark: "idle" },
  { name: "chrome", icon: <Ic s={24} vb={24}><circle cx="12" cy="12" r="12" fill="#fbbc05" /><path d="M12 6h10.400A12 12 0 0 0 1.600 6L6.800 15z" fill="#e33b2e" /><path d="M1.600 6a12 12 0 0 0 10.400 18l5.200-9H7z" fill="#2ba24c" /><circle cx="12" cy="12" r="5.600" fill="#fff" /><circle cx="12" cy="12" r="4.400" fill="#3f7de8" /></Ic> },
  { name: "explorer", icon: <Ic s={24} vb={24}><path d="M0 2.500A1.500 1.500 0 0 1 1.500 1H8l2.500 3H24v6H0z" fill="#d99a10" /><path d="M0 5.500h9L11 4h13v19H0z" fill="#fdd04a" /><path d="M4 23v-5a3 3 0 0 1 3-3h10a3 3 0 0 1 3 3v5z" fill="#1574c0" /></Ic> },
  { name: "facebook", icon: <div className="flex h-6 w-6 items-end justify-center overflow-hidden rounded-full bg-[#0a7cff]"><FaFacebookF size={20} color="#fff" /></div> },
  { name: "linkedin", icon: <div className="flex h-6 w-6 items-center justify-center rounded-[2px] bg-[#0a66c2]"><FaLinkedinIn size={18} color="#fff" /></div>, badge: "2" },
  { name: "discord", icon: <div className="flex h-6 w-6 items-center justify-center rounded-full bg-[#5865f2]"><FaDiscord size={15} color="#fff" /></div> },
  { name: "chip-tool", icon: <Ic s={24} vb={24}><rect width="24" height="24" rx="4.500" fill="#fafafa" /><path d="M9 2v4M12 2v4M15 2v4" stroke="#fbb017" strokeWidth="1.600" /><path d="M9 18v4M12 18v4M15 18v4" stroke="#b455e0" strokeWidth="1.600" /><path d="M2 9h4M2 12h4M2 15h4" stroke="#e8453c" strokeWidth="1.600" /><path d="M18 9h4M18 12h4M18 15h4" stroke="#2bb6e8" strokeWidth="1.600" /><rect x="5.500" y="5.500" width="13" height="13" rx="3" fill="#1c1c1c" /><circle cx="12" cy="12" r="3" stroke="#fff" strokeWidth="1.800" /></Ic> },
  { name: "whatsapp", icon: <FaWhatsapp size={26} color="#25d366" />, badge: "99+" },
  { name: "x-tool", icon: <Ic s={24} vb={24}><rect x=".7" y=".7" width="22.600" height="22.600" rx="1" fill="#8088c4" stroke="#3a56a6" strokeWidth="1.400" /><path d="M4 5h7M13 5h7M4 19h7M13 19h7M7 5l10 14M17 5L7 19" stroke="#16409c" strokeWidth="2.600" /></Ic> },
  { name: "board-finder", icon: <Ic s={24} vb={24}><path d="M3 8l10-7 11 8-8 10-10-2z" fill="#2f4f38" stroke="#c9d0b0" /><circle cx="13" cy="8" r="6" fill="#666" stroke="#c99a2c" strokeWidth="1.800" /><path d="M10 10l6-4M10 7l5-2M12 11l5-3" stroke="#ddd" /><path d="M9 13l-6 9" stroke="#e0b040" strokeWidth="2.600" /><path d="M5 19l-3 4" stroke="#49b4e0" strokeWidth="3" /></Ic> },
  { name: "engine", icon: <Ic s={24} vb={24}><rect width="24" height="24" fill="#fafafa" /><path d="M8 3l10-2" stroke="#f4a6a6" /><path d="M2 6h4M9 6h3M17 6h3" stroke="#555" strokeWidth="1.200" /><path d="M1 9h22" stroke="#d88" strokeWidth=".8" strokeDasharray="3 1" /><path d="M4 12l5-2 11 1 2 4-1 6-9 2-7-2-2-5z" fill="#2e3b49" /><path d="M5 15h14M6 18h13M8 12v9M12 12v9M16 12v9" stroke="#5d6c7b" strokeWidth=".8" /></Ic> },
  { name: "cube", icon: <Ic s={20} vb={20}><rect width="20" height="20" rx="4" fill="#000" /><path d="M10 3.500l5.500 3v7l-5.500 3-5.500-3v-7z" fill="#bbb" /><path d="M4.500 6.500h11L10 16.500V10z" fill="#fff" /></Ic> },
  { name: "visual-studio", icon: <Ic s={24} vb={24}><path d="M0 6l3-2 15 14-1 6L0 9z" fill="#8a5cc8" /><path d="M0 18l3 2L18 6 17 0 0 15z" fill="#7440b0" /><path d="M0 6l3-1v14l-3-1z" fill="#9b6cd8" /><path d="M17 0l7 3v18l-7 3z" fill="#c297ff" /></Ic> },
  { name: "vscode", icon: <Ic s={24} vb={24}><path d="M0 9l3-2 15 11v6z" fill="#1073b8" /><path d="M0 15l3 2L18 6V0z" fill="#1a86d0" /><path d="M17.500 0L24 3v18l-6.500 3z" fill="#2aa3f0" /></Ic> },
  { name: "matlab-a", icon: <Matlab /> },
  { name: "matlab-b", icon: <Matlab />, mark: "active" },
  { name: "sublime", icon: <Ic s={24} vb={24}><rect width="24" height="24" rx="1.500" fill="#4a4a4a" /><path d="M6 7.500L18 4v4.500L12 10.500l6 2v4.500L6 20.500V16l6-2-6-2z" fill="#ff9800" /></Ic> },
  { name: "todo", icon: <Ic s={24} vb={24}><path d="M0 11l4-4 7 7-4.500 4.500z" fill="#195abd" /><path d="M6.500 17.500L19.500 3 24 7 10.500 21.500z" fill="#3fa0f0" /></Ic> },
  { name: "altium", icon: <Ic s={24} vb={24}><path d="M5.500 6V1.500h5.500l7.500 5.500v10l-7.500 5.500H5.500V18M18 7L8 13v-3l4-3M8 13v4h4l4-3" stroke="#c6a76a" strokeWidth="2.600" /></Ic> },
  { name: "matlab-c", icon: <Matlab />, mark: "idle" },
];

const TRAY: ReactNode[] = [
  <Edge s={16} />,
  <Copilot s={16} />,
  <Ic><rect width="16" height="16" fill="#181818" /><path d="M6 4h8v8H6z" fill="#76b900" /><path d="M2 8c3-5 8-4 10 0-3 4-8 4-10 0z" stroke="#76b900" fill="#2b3f0a" /><circle cx="7.500" cy="8" r="1.500" fill="#9fd52a" /></Ic>,
  <Ic><path d="M2 12a3.500 3.500 0 0 1 0-6 5 5 0 0 1 9-2 4 4 0 0 1 3 7z" fill="#a9a9a9" /><circle cx="11.500" cy="11.500" r="4.500" fill="#d92b3a" /><path d="M9.800 9.800l3.400 3.400M13.200 9.800l-3.400 3.400" stroke="#fff" strokeWidth="1.300" /></Ic>,
  <Ic><path d="M2 12a3.500 3.500 0 0 1 0-6 5 5 0 0 1 9-2 4 4 0 0 1 3 7z" fill="#1b83d8" /><circle cx="11.500" cy="11.500" r="4.500" fill="#e8f2fb" /><path d="M9 11a2.600 2.600 0 0 1 5-.5M14 12a2.600 2.600 0 0 1-5 .5" stroke="#1b6fc0" strokeWidth="1.200" /></Ic>,
  <Ic><rect width="16" height="16" rx="2" fill="#fff" /><path d="M3 6.500a5.500 5.500 0 0 1 10 0" stroke="#2f9be0" strokeWidth="1.800" /><path d="M13 9.500a5.500 5.500 0 0 1-10 0" stroke="#e8504a" strokeWidth="1.800" /><path d="M4.500 8h7" stroke="#7ab" strokeWidth="1.500" /></Ic>,
  <Ic><path d="M7 0l7 2.500V8c0 4-3 6.500-7 8-4-1.500-7-4-7-8V2.500z" fill="#2f9fe5" /><path d="M7 0v16c-4-1.500-7-4-7-8V2.500z" fill="#5ac1f5" /><circle cx="11.500" cy="11.500" r="4.500" fill="#13892b" /><path d="M9.500 11.500l1.500 1.500 2.500-3" stroke="#fff" strokeWidth="1.200" /></Ic>,
  <Ic><rect width="16" height="16" fill="#08103f" /><path d="M4 3h9l-1 9H3z" fill="#2c4ae8" /><path d="M4 3h9l-9 9z" fill="#5b3df0" /><rect x="12.500" y="12.500" width="3.500" height="3.500" fill="#e25be8" /></Ic>,
  <Ic><rect x=".7" y=".7" width="14.600" height="14.600" fill="#222" stroke="#8fcf1c" strokeWidth="1.400" /><path d="M2 3.500h12" stroke="#d85a9a" strokeDasharray="1.500 .7" strokeWidth="1.400" /><path d="M2 6h12" stroke="#e0a04a" strokeDasharray="1.500 .7" strokeWidth="1.400" /><path d="M2 8.500h12M2 11h12" stroke="#b0d850" strokeDasharray="1.500 .7" strokeWidth="1.400" /><path d="M2 13h12" stroke="#5ab0e0" strokeDasharray="1.500 .7" strokeWidth="1.200" /></Ic>,
  <Ic><circle cx="8" cy="8" r="7.300" fill="#1f4fc8" stroke="#e8eefc" strokeWidth="1.300" /><path d="M6.500 4.500v6h4" stroke="#fff" strokeWidth="1.500" /></Ic>,
  <Ic><rect x=".6" y="2.600" width="14.800" height="10.800" rx="1.500" stroke="#eee" strokeWidth="1.200" /><path d="M3 5.500h10M3 8h10" stroke="#eee" strokeWidth="1.200" strokeDasharray="1.300 1.300" /><path d="M4.500 10.800h7" stroke="#eee" strokeWidth="1.200" /></Ic>,
];

function Taskbar() {
  return (
    <div className="flex h-[47px] border-t border-[#4b4b4b] bg-[#222222] pl-[10.5px] leading-4 text-white">
      {APPS.map((a) => (
        <div key={a.name} className="relative flex h-[46px] w-11 shrink-0 items-center justify-center">
          {a.mark === "active" && <span className="absolute top-[3px] left-[2px] h-10 w-[39px] rounded border border-[#3e3e3e] bg-[#2f2f2f]" />}
          <div className="relative flex h-6 w-6 items-center justify-center">
            {a.icon}
            {a.badge && <Badge wide={a.badge.length > 1}>{a.badge}</Badge>}
          </div>
          {a.mark === "active" && <span className="absolute bottom-[4px] left-[14px] h-[3px] w-4 rounded-full bg-[#ff5f5f]" />}
          {a.mark === "idle" && <span className="absolute bottom-[4px] left-[19px] h-[3px] w-1.5 rounded-full bg-[#9a9a9a]" />}
        </div>
      ))}
      <div className="ml-auto flex h-full w-[710px] items-center">
        <div className="relative h-6 w-6">
          <div className="mt-[2px] ml-[2px] h-5 w-5 rounded-full bg-gradient-to-b from-[#f4b52a] to-[#f27a12]" />
          <span className="absolute -top-[6px] left-[9px] h-4 w-4 rounded-full bg-[#ff99a4] text-center text-[12px] leading-4 text-black">6</span>
        </div>
        <div className="ml-[6px] flex flex-col">
          <Fit w={25}>34°C</Fit>
          <Fit w={34} className="text-[#c8c8c8]">Sunny</Fit>
        </div>
        <div className="ml-[96px] flex gap-4">
          {TRAY.map((t, i) => <div key={i} className="h-4 w-4">{t}</div>)}
        </div>
        <Fit w={24} className="ml-[18px] pt-px">ENG</Fit>
        <Ic className="ml-[18px]"><path d="M.8 6.500c4-4.500 10.400-4.500 14.400 0M3 9c3-3.300 7-3.300 10 0M5.300 11.300c1.600-1.700 3.800-1.700 5.400 0" stroke="#f4f4f4" strokeWidth="1.300" /><circle cx="8" cy="13.300" r="1.300" fill="#f4f4f4" /></Ic>
        <Ic className="ml-2"><path d="M.8 6v4h2.700L7.500 13.500v-11L3.500 6z" stroke="#f4f4f4" strokeWidth="1.200" /><path d="M9.500 5.500c1.300 1.500 1.300 3.500 0 5M11.500 3.500c2.500 2.500 2.500 6.500 0 9M13.500 1.800c3.300 3.300 3.300 9.100 0 12.400" stroke="#f4f4f4" strokeWidth="1.100" /></Ic>
        <Ic className="ml-2"><path d="M6 4.500h6.500a1.500 1.500 0 0 1 1.500 1.500v5a1.500 1.500 0 0 1-1.500 1.500h-10A1.500 1.500 0 0 1 1 11V9" stroke="#f4f4f4" strokeWidth="1.200" /><path d="M5 7h7v3.500H3z" fill="#f4f4f4" /><path d="M15.300 7v3" stroke="#f4f4f4" strokeWidth="1.300" /><path d="M3.500 1L1 5h2l-1 3 3-4H3.200z" fill="#f4f4f4" stroke="#f4f4f4" strokeWidth=".6" /></Ic>
        <div className="ml-[17px] flex flex-col items-end">
          <Fit w={43}>7:49 PM</Fit>
          <Fit w={55}>6/29/2025</Fit>
        </div>
      </div>
    </div>
  );
}

export default function App() {
  return (
    <div className="flex h-[1439px] w-[2559px] flex-col overflow-hidden bg-[#f0f0f0] font-['Open_Sans','Noto_Sans',sans-serif] text-[12px]">
      <TitleBar />
      <Ribbon />
      <div className="flex h-[1226px]">
        <div className="flex w-[31px] shrink-0 justify-between border-r border-[#c2c2c2] pt-px pl-px">
          <div className="flex h-[93px] w-[23px] items-center justify-center border border-[#d8d8d8] bg-white text-black">
            <div className="-rotate-90 leading-4"><Fit w={71}>Model Browser</Fit></div>
          </div>
        </div>
        <Editor />
        <div className="flex flex-1 justify-end border-l border-[#c2c2c2] pt-[2px] pr-px">
          <div className="flex h-28 w-[23px] items-center justify-center border border-[#d8d8d8] bg-white text-black">
            <div className="rotate-90 leading-4"><Fit w={90}>Property Inspector</Fit></div>
          </div>
        </div>
      </div>
      <div className="flex h-[22px] pr-[5px] pl-[6px] leading-[23px] text-black">
        <Fit w={32}>Ready</Fit>
        <Fit w={28} className="ml-[1253px]">270%</Fit>
        <Fit w={77} className="ml-auto text-[#000080]">FixedStepAuto</Fit>
      </div>
      <Taskbar />
    </div>
  );
}
